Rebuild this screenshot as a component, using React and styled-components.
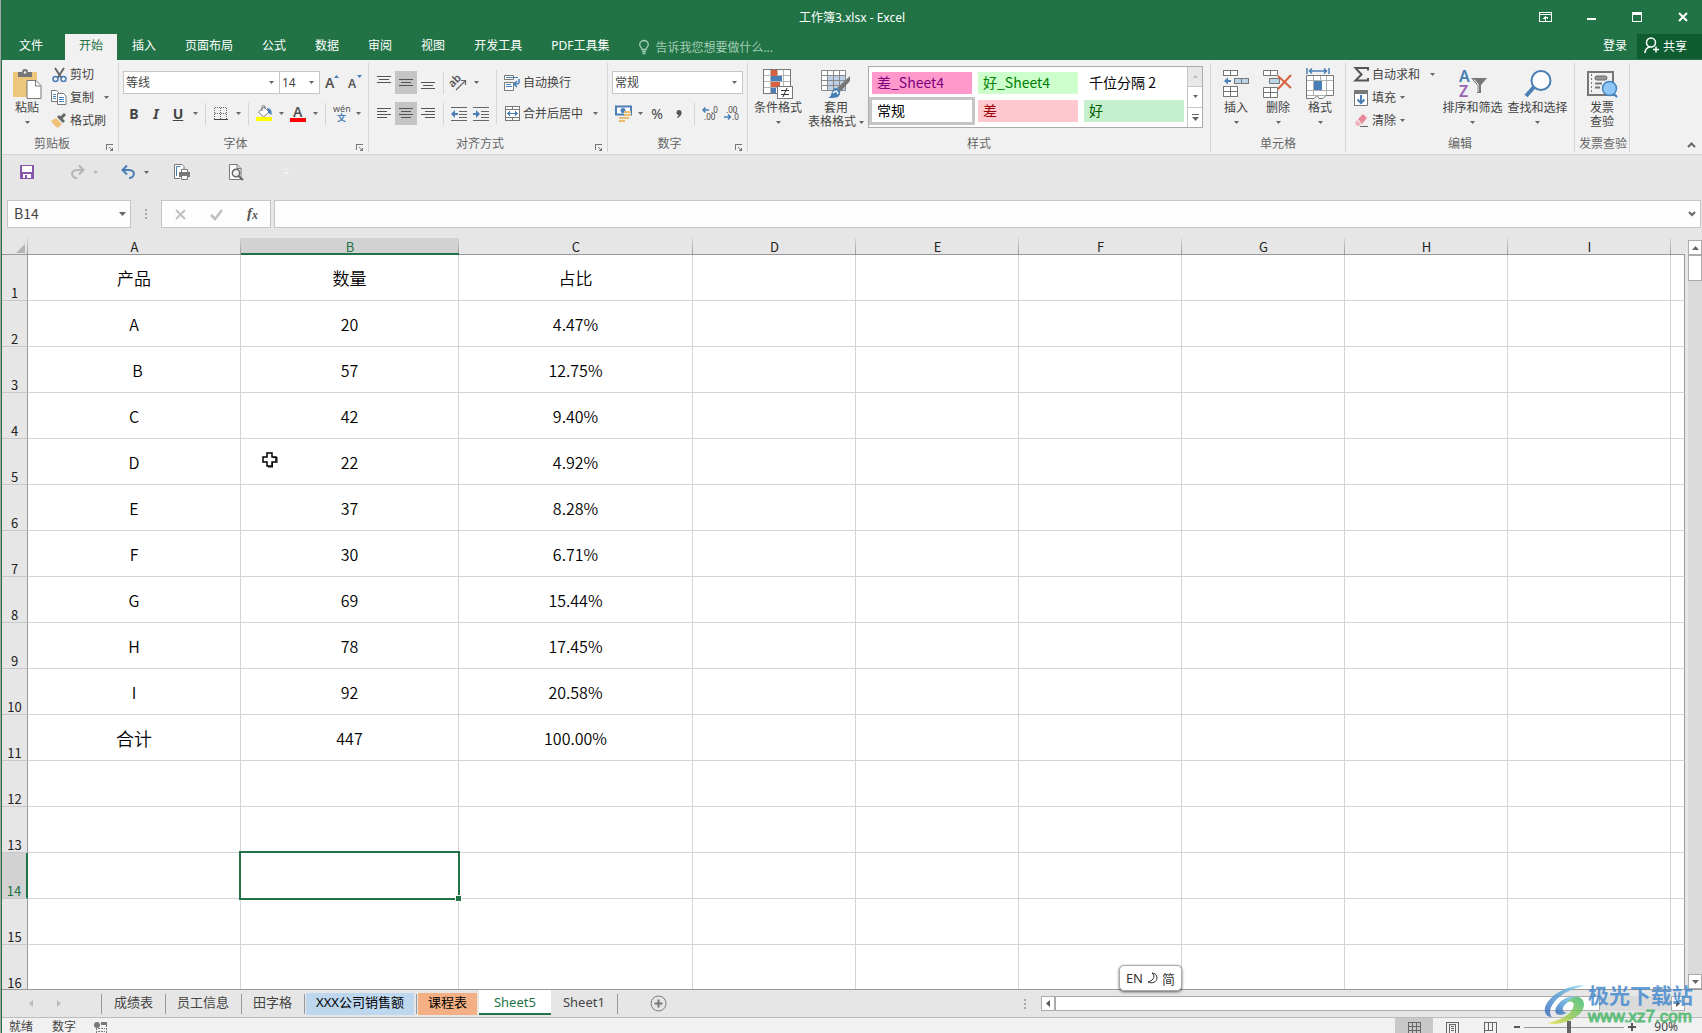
import styled, { createGlobalStyle, css } from "styled-components";

const UI = `"Noto Sans", "Noto Sans CJK SC", sans-serif`;
const CELL = `"Noto Sans CJK SC", sans-serif`;

const GlobalStyle = createGlobalStyle`
  * {
    box-sizing: border-box;
  }
  body {
    margin: 0;
    font-family: ${UI};
    font-size: 12px;
    color: #444;
  }
  button, input, select {
    font: inherit;
    color: inherit;
    margin: 0;
    padding: 0;
    border: 0;
    background: none;
    border-radius: 0;
    outline: none;
  }
  svg {
    display: block;
    flex: none;
    overflow: visible;
  }
`;

const Window = styled.div`
  position: relative;
  display: flex;
  flex-direction: column;
  height: 100vh;
  overflow: hidden;
  border-left: 1px solid #a6a6a6;
  padding-left: 1px;
  background: #217346;
`;

/* title bar and tabs */
const TitleBar = styled.header`
  display: grid;
  grid-template-columns: 1fr auto 1fr;
  align-items: center;
  height: 34px;
  flex: none;
  color: #fff;
`;
const Title = styled.h1`
  grid-column: 2;
  margin: 0;
  font-size: 12px;
  font-weight: normal;
`;
const WindowButtons = styled.div`
  display: flex;
  justify-content: flex-end;
  gap: 8px;
`;
const WindowButton = styled.button`
  width: 38px;
  height: 32px;
  display: grid;
  place-items: center;
`;
const TabBar = styled.nav`
  display: flex;
  gap: 1px;
  height: 26px;
  flex: none;
  color: #fff;
`;
const Tab = styled.button`
  padding: ${(p) => (p.$file ? "0 21px 2px 17px" : "0 14px 2px")};
  line-height: 20px;
  white-space: nowrap;
  ${(p) =>
    p.$active &&
    css`
      background: #f1f1f1;
      color: #217346;
    `}
`;
const TellMe = styled.label`
  display: flex;
  align-items: center;
  gap: 6px;
  flex: 1;
  padding-left: 15px;
  color: #a3cdb4;
  input {
    flex: 1;
    min-width: 0;
  }
  input::placeholder {
    color: #a3cdb4;
    opacity: 1;
  }
`;
const SignIn = styled.a`
  color: #fff;
  text-decoration: none;
  line-height: 24px;
  margin-right: 9px;
`;
const Share = styled.button`
  display: flex;
  align-items: center;
  gap: 4px;
  width: 65px;
  height: 25px;
  padding: 0 0 2px 7px;
  background: #0e5c2f;
`;

/* ribbon */
const Ribbon = styled.section`
  display: flex;
  height: 95px;
  flex: none;
  padding: 3px 0 2px;
  background: #f1f1f1;
  border-bottom: 1px solid #d2d2d2;
`;
const Group = styled.div`
  display: flex;
  flex-direction: column;
  flex: none;
  width: ${(p) => p.$w}px;
  padding: 0 4px;
  border-right: 1px solid #d4d4d4;
`;
const GroupBody = styled.div`
  display: flex;
  height: 73px;
`;
const GroupFoot = styled.div`
  display: flex;
  height: 16px;
  line-height: 16px;
  color: #666;
  white-space: nowrap;
  span {
    flex: 1;
    text-align: center;
  }
  button {
    width: 16px;
    display: grid;
    align-items: end;
    justify-items: end;
  }
`;
const Stack = styled.div`
  display: flex;
  flex-direction: column;
  flex: none;
  width: ${(p) => (p.$w ? p.$w + "px" : "auto")};
`;
const Rows = styled(Stack)`
  padding-top: 4px;
`;
const ToolRow = styled.div`
  display: flex;
  align-items: center;
  height: 31px;
`;
const Tool = styled.button`
  display: grid;
  place-items: center;
  width: ${(p) => (p.$wide ? 24 : 22)}px;
  height: 23px;
  flex: none;
  font-size: 14px;
  line-height: 20px;
  font-weight: ${(p) => (p.$bold ? 700 : 400)};
  background: ${(p) => (p.$on ? "#c5c5c5" : "transparent")};
`;
const DropButton = styled.button`
  display: grid;
  place-items: center;
  width: 12px;
  height: 22px;
  flex: none;
`;
const Sep = styled.i`
  width: 1px;
  height: ${(p) => (p.$tall ? 54 : 22)}px;
  margin: ${(p) => (p.$tall ? "7px 4px 0" : "0 4px")};
  background: #d4d4d4;
  flex: none;
`;
const SmallButton = styled.button`
  display: flex;
  align-items: center;
  height: ${(p) => p.$h || 23}px;
  white-space: nowrap;
  line-height: 18px;
  > span {
    width: 22px;
    display: grid;
    place-items: center;
  }
  > span + span {
    width: 12px;
    margin-left: ${(p) => (p.$wide ? "6px" : "0")};
  }
`;
const BigButton = styled.button`
  display: flex;
  flex-direction: column;
  align-items: center;
  flex: none;
  width: ${(p) => p.$w}px;
  padding-top: 4px;
  line-height: 14px;
  white-space: nowrap;
  > span {
    display: flex;
    align-items: center;
    justify-content: center;
    gap: 3px;
    min-height: 14px;
  }
  > span:first-child {
    height: 34px;
  }
`;
const Combo = styled.label`
  position: relative;
  display: block;
  width: ${(p) => p.$w}px;
  height: 23px;
  border: 1px solid #c6c6c6;
  background: #fff;
  & + & {
    border-left: 0;
  }
  select {
    appearance: none;
    width: 100%;
    height: 100%;
    padding-left: 2px;
    line-height: 18px;
  }
  svg {
    position: absolute;
    right: 5px;
    top: 9px;
    pointer-events: none;
  }
`;
const Gallery = styled.div`
  display: flex;
  width: 335px;
  height: 62px;
  margin-top: 3px;
  border: 1px solid #ababab;
  background: #fff;
`;
const Swatches = styled.div`
  display: grid;
  grid-template-columns: repeat(3, 106px);
  grid-template-rows: 28px 28px;
  padding-top: 2px;
`;
const Swatch = styled.button`
  text-align: left;
  padding: 0 0 2px 5px;
  font-family: ${CELL};
  font-size: 14px;
  line-height: 20px;
  color: ${(p) => p.$fg};
  background: ${(p) => p.$bg};
  background-clip: padding-box;
  border: 3px solid ${(p) => (p.$on ? "#c6c6c6" : "transparent")};
`;
const GalleryScroll = styled.div`
  display: flex;
  flex-direction: column;
  flex: 1;
  border-left: 1px solid #c6c6c6;
  button {
    flex: 1;
    display: grid;
    place-items: center;
  }
  button:first-child {
    background: #e8e8e8;
  }
  button + button {
    border-top: 1px solid #c6c6c6;
  }
`;
const Collapse = styled.button`
  margin-left: auto;
  align-self: flex-end;
  width: 22px;
  height: 14px;
  display: grid;
  place-items: center;
`;

/* quick access and formula bar */
const QuickAccess = styled.div`
  display: grid;
  grid-template-columns: 50px 51px 54px 54px 50px 28px;
  align-items: center;
  height: 34px;
  flex: none;
  padding-left: 11px;
  background: #e6e6e6;
`;
const QuickItem = styled.div`
  display: flex;
  align-items: center;
  button {
    display: grid;
    place-items: center;
    height: 24px;
    width: 28px;
  }
  button + button {
    width: 8px;
  }
`;
const FormulaBar = styled.div`
  display: grid;
  grid-template-columns: 124px 30px 110px 1fr;
  height: 49px;
  flex: none;
  padding: 11px 1px 10px 5px;
  background: #e6e6e6;
`;
const Field = styled.div`
  display: flex;
  align-items: center;
  border: 1px solid #c6c6c6;
  background: #fdfdfd;
  margin-left: ${(p) => (p.$gap ? "3px" : "0")};
  input {
    flex: 1;
    min-width: 0;
    height: 100%;
    padding: 0 0 2px 6px;
    font-family: ${CELL};
    font-size: 14px;
  }
  button {
    width: ${(p) => (p.$marks ? 36 : 16)}px;
    height: 100%;
    display: grid;
    place-items: center;
  }
`;
const Grip = styled.div`
  display: grid;
  place-items: center;
`;

/* sheet */
const SheetArea = styled.main`
  display: flex;
  flex: 1;
  min-height: 0;
  background: #e6e6e6;
  border-bottom: 1px solid #999;
`;
const SheetView = styled.div`
  position: relative;
  flex: 1;
  overflow: hidden;
`;
const Sheet = styled.table`
  width: 100%;
  table-layout: fixed;
  border-collapse: separate;
  border-spacing: 0;
  font-family: ${CELL};
  th {
    font-weight: 400;
    color: #222;
    font-size: 13px;
  }
`;
const ColHead = styled.th`
  height: 17px;
  padding: 2px 0 0;
  line-height: 14px;
  border-bottom: 1px solid #999;
  background: linear-gradient(#d6d6d6, #999) right / 1px 100% no-repeat #e6e6e6;
  ${(p) =>
    p.$on &&
    css`
      &&& {
        color: #217346;
      }
      background-color: #d2d2d2;
      border-bottom: 2px solid #217346;
      line-height: 13px;
    `}
  &:last-child {
    background: #e6e6e6;
  }
`;
const Corner = styled(ColHead)`
  svg {
    margin: 2px 3px 0 auto;
  }
`;
const RowHead = styled.th`
  height: 46px;
  padding: 0;
  vertical-align: bottom;
  line-height: 14px;
  background: ${(p) => (p.$on ? "#d2d2d2" : "#e6e6e6")};
  border-right: ${(p) => (p.$on ? "2px solid #217346" : "1px solid #999")};
  border-bottom: 1px solid #c8c8c8;
  ${(p) =>
    p.$on &&
    css`
      &&& {
        color: #217346;
      }
    `}
`;
const Cell = styled.td`
  position: relative;
  height: 46px;
  padding: 0;
  text-align: center;
  white-space: pre;
  font-size: ${(p) => p.$size || 16}px;
  font-weight: 350;
  line-height: 24px;
  color: #000;
  background: #fff;
  border-right: 1px solid #d4d4d4;
  border-bottom: 1px solid #d4d4d4;
  &:last-child {
    border-right-color: #999;
  }
`;
const Selection = styled.span`
  position: absolute;
  inset: -2px;
  z-index: 1;
  border: 2px solid #217346;
  &::after {
    content: "";
    position: absolute;
    right: -3px;
    bottom: -3px;
    width: 5px;
    height: 5px;
    background: #217346;
    box-shadow: 0 0 0 1px #fff;
  }
`;
const Pointer = styled.svg`
  position: absolute;
  left: 260px;
  top: 214px;
`;
const VScroll = styled.div`
  display: flex;
  flex-direction: column;
  width: 14px;
  margin: 2px 0 0 3px;
  background: #dadada;
`;
const ScrollButton = styled.button`
  width: 14px;
  height: 15px;
  flex: none;
  display: grid;
  place-items: center;
  background: #fff;
  border: 1px solid #ababab;
`;
const VThumb = styled.div`
  height: 26px;
  background: #fff;
  border: 1px solid #ababab;
`;
const Spacer = styled.div`
  flex: 1;
`;

/* sheet tabs and status bar */
const SheetBar = styled.div`
  display: flex;
  height: 28px;
  flex: none;
  padding-right: 17px;
  background: #e6e6e6;
  border-bottom: 1px solid #bcbcbc;
`;
const SheetNav = styled.div`
  display: flex;
  width: 99px;
  padding-left: 15px;
  button {
    width: 28px;
    display: grid;
    place-items: center;
  }
`;
const SheetTab = styled.button`
  position: relative;
  height: 22px;
  margin: 3px 2px;
  padding: 0 10px 4px;
  font-size: 13px;
  line-height: 18px;
  white-space: nowrap;
  color: ${(p) => (p.$bg ? "#000" : "#444")};
  background: ${(p) => p.$bg || "transparent"};
  ${(p) =>
    p.$on
      ? css`
          height: 25px;
          margin: 0;
          padding: 1px 15px 0;
          background: #fff;
          color: #217346;
          border-bottom: 2px solid #217346;
        `
      : css`
          &::after {
            content: "";
            position: absolute;
            right: -3px;
            top: 1px;
            width: 1px;
            height: 20px;
            background: #999;
          }
        `}
`;
const FirstRule = styled.i`
  width: 1px;
  height: 20px;
  margin-top: 4px;
  background: #999;
`;
const AddSheet = styled.button`
  width: 84px;
  display: grid;
  place-items: center;
`;
const HScroll = styled.div`
  display: flex;
  width: 644px;
  height: 15px;
  margin-top: 6px;
  margin-left: 5px;
  background: #dadada;
`;
const HThumb = styled.div`
  width: 545px;
  background: #fff;
  border: 1px solid #ababab;
`;
const StatusBar = styled.footer`
  display: flex;
  justify-content: space-between;
  height: 15px;
  flex: none;
  overflow: hidden;
  background: #f1f1f1;
  padding: 0 24px 0 7px;
`;
const StatusGroup = styled.div`
  display: flex;
  height: 18px;
  line-height: 18px;
`;
const StatusText = styled.span`
  width: ${(p) => p.$w}px;
`;
const Percent = styled.output`
  width: 39px;
  text-align: right;
`;
const ViewButton = styled.button`
  width: 38px;
  display: grid;
  align-items: center;
  justify-items: center;
  padding-top: 3px;
  background: ${(p) => (p.$on ? "#c8c8c8" : "transparent")};
`;
const ZoomButton = styled.button`
  width: 15px;
  display: grid;
  place-items: center;
`;
const ZoomRange = styled.input`
  appearance: none;
  width: 100px;
  background: linear-gradient(#999, #999) center / 100% 1px no-repeat;
  &::-webkit-slider-thumb {
    appearance: none;
    width: 4px;
    height: 12px;
    background: #666;
  }
`;

/* overlays */
const Ime = styled.div`
  position: absolute;
  right: 520px;
  bottom: 42px;
  display: flex;
  align-items: center;
  gap: 4px;
  height: 26px;
  padding: 0 6px;
  font-size: 13px;
  color: #333;
  background: #fff;
  border: 1px solid #aaa;
  border-radius: 5px;
  box-shadow: 0 1px 3px rgba(0, 0, 0, 0.6);
`;
const Watermark = styled.div`
  position: absolute;
  right: 9px;
  bottom: 5px;
  display: flex;
  align-items: center;
  gap: 3px;
  opacity: 0.8;
  pointer-events: none;
  strong {
    display: block;
    font-family: ${CELL};
    font-size: 21px;
    line-height: 24px;
    color: #3d86cd;
  }
  span {
    display: block;
    font-family: "Liberation Sans", sans-serif;
    font-size: 17px;
    line-height: 22px;
    color: #41b565;
    -webkit-text-stroke: 1px #41b565;
  }
`;

const G = "#777";
const B = "#4a7fb5";

const Svg = ({ w, h, crisp, children }) => (
  <svg
    width={w}
    height={h}
    viewBox={`0 0 ${w} ${h}`}
    fill="none"
    shapeRendering={crisp ? "crispEdges" : "auto"}
    aria-hidden="true"
  >
    {children}
  </svg>
);

const Arrow = ({ big, color = "#666" }) =>
  big ? (
    <Svg w={7} h={4}><path d="M0 0h7L3.500 4z" fill={color} /></Svg>
  ) : (
    <Svg w={5} h={3}><path d="M0 0h5L2.500 3z" fill={color} /></Svg>
  );

const Lines = ({ w = 14, rows }) => (
  <Svg w={w} h={13} crisp>
    {rows.map(([x, y, len]) => (
      <path key={y} d={`M${x} ${y}.500h${len}`} stroke="#555" />
    ))}
  </Svg>
);

const PasteIcon = () => (
  <Svg w={30} h={30}>
    <path d="M1 3h24v25H1z" fill="#eec77f" />
    <path d="M6 3h4a3 3 0 0 1 6 0h4v5H6z" fill="#777" />
    <circle cx="13" cy="3.500" r="1.200" fill="#f1f1f1" />
    <path d="M15 11.500h9l5 5v13H15z" fill="#fff" stroke={G} />
    <path d="M23.500 11.500v5.500h5" stroke={G} />
  </Svg>
);
const CutIcon = () => (
  <Svg w={15} h={16}>
    <path d="M3 1l6.500 10M12 1L5.500 11" stroke="#666" strokeWidth="2" />
    <circle cx="3.500" cy="12" r="2.500" stroke={B} strokeWidth="1.500" />
    <circle cx="11.500" cy="12" r="2.500" stroke={B} strokeWidth="1.500" />
  </Svg>
);
const CopyIcon = () => (
  <Svg w={16} h={15}>
    <path d="M.5.5h5l2 2v9h-7z" fill="#fff" stroke={G} />
    <path d="M2 4.500h3M2 6.500h3M2 8.500h3" stroke={B} />
    <path d="M6.500 3.500h6l2.500 2.500v8.500H6.500z" fill="#fff" stroke={G} />
    <path d="M8 7.500h5M8 9.500h5M8 11.500h5" stroke={B} />
  </Svg>
);
const BrushIcon = () => (
  <Svg w={16} h={15}>
    <path d="M0 8l5-3 6 6-4 4-3-2z" fill="#eec07a" />
    <path d="M6 4l2-2 6 6-2 2z" fill="#666" />
    <path d="M10 5l4-4" stroke="#666" strokeWidth="3" />
  </Svg>
);
const LauncherIcon = () => (
  <Svg w={8} h={8} crisp>
    <path d="M.5 6V.5H7M3 3l3 3" stroke="#777" />
    <path d="M7 3v4H3z" fill="#777" />
  </Svg>
);
const FontSize = ({ up }) => (
  <Svg w={14} h={15}>
    <text x="0" y="13" fontSize={up ? 14 : 12} fontWeight="600" fill="#555">A</text>
    <path d={up ? "M9 3l2.500-3L14 3z" : "M9 0h5l-2.500 3z"} fill={B} />
  </Svg>
);
const BordersIcon = () => (
  <Svg w={14} h={14} crisp>
    <path d="M.5 1v11M6.500 1v11M12.500 1v11M1 .5h12M1 6.500h12" stroke="#666" strokeDasharray="1 1" />
    <path d="M0 12.500h14" stroke="#444" />
  </Svg>
);
const FillIcon = () => (
  <Svg w={17} h={17}>
    <path d="M2.500 7L8 2l5 5-5.500 5z" fill="#fff" stroke="#777" />
    <path d="M6 6V2a1.500 1.500 0 0 1 3 0v2" stroke="#777" />
    <path d="M11 3c4 0 5 3 4.500 7l-3-2z" fill={B} />
    <path d="M0 12h16v4H0z" fill="#ff0" />
  </Svg>
);
const FontColorIcon = () => (
  <Svg w={16} h={16}>
    <text x="3" y="11" fontSize="14" fontWeight="600" fill="#555">A</text>
    <path d="M0 12h16v4H0z" fill="#f00" />
  </Svg>
);
const WenIcon = () => (
  <Svg w={17} h={18}>
    <text x="0" y="7" fontSize="9" fill="#555">wén</text>
    <text x="4" y="16" fontSize="9" fontWeight="700" fill={B}>文</text>
  </Svg>
);
const OrientIcon = () => (
  <Svg w={18} h={16}>
    <text x="0" y="9" fontSize="11" fontWeight="600" fill="#555" transform="rotate(-45 6 8)">ab</text>
    <path d="M6 15L15 6M11 5.500h4.500V10" stroke="#666" strokeWidth="1.200" />
  </Svg>
);
const IndentIcon = ({ right }) => (
  <Svg w={16} h={14} crisp>
    <path d="M0 .5h16M8 4.500h8M8 7.500h8M8 10.500h8M0 13.500h16" stroke="#666" />
    <g shapeRendering="auto">
      <path d={right ? "M0 7h5" : "M2 7h5"} stroke={B} strokeWidth="2" />
      <path d={right ? "M3 3l4 4-4 4z" : "M4 3L0 7l4 4z"} fill={B} />
    </g>
  </Svg>
);
const WrapIcon = () => (
  <Svg w={16} h={16}>
    <path d="M.5.5h9v4h-9zM.5 7.500h9v8h-9z" fill="#fff" stroke={G} />
    <path d="M2 2.500h12M2 9.500h5M2 11.500h6" stroke={B} />
    <path d="M15 4v3q0 2-3 2h-1M13 6l-3 3 3 3" stroke={B} strokeWidth="1.500" />
  </Svg>
);
const MergeIcon = () => (
  <Svg w={15} h={15} crisp>
    <path d="M.5.5h14v14H.5zM.5 3.500h14M.5 11.500h14M7.500 0v3.500M7.500 11.500v3" fill="#fff" stroke={G} />
    <path d="M3 7.500h9M5 5.500l-2 2 2 2M10 5.500l2 2-2 2" stroke={B} />
  </Svg>
);
const MoneyIcon = () => (
  <Svg w={17} h={17}>
    <path d="M1 1.500h15v8H1z" fill="#fff" stroke={B} strokeWidth="2" />
    <circle cx="8" cy="5.500" r="2.500" fill={B} />
    <path d="M9 6h7v6H9zM4 12h7v4H4z" fill="#f1f1f1" />
    <path d="M9 7h7M9 10h7M9 13h5M4 13h7M4 16h6" stroke="#e8bd72" strokeWidth="2" />
  </Svg>
);
const DecimalIcon = ({ less }) => (
  <Svg w={16} h={15}>
    <text x={less ? 2 : 9} y="7" fontSize="8" fill="#444">{less ? ".00" : ".0"}</text>
    <text x={less ? 8 : 2} y="14" fontSize="8" fill="#444">{less ? ".0" : ".00"}</text>
    <path d={less ? "M0 11h6M4 8.500L6.500 11 4 13.500" : "M1 4h6M3.500 1.500L1 4l2.500 2.500"} stroke={B} strokeWidth="1.500" />
  </Svg>
);
const CondIcon = () => (
  <Svg w={30} h={31} crisp>
    <path d="M.5.5h27v24H.5z" fill="#fff" />
    <path d="M8 19h5v5H8z" fill={B} />
    <path d="M7.500 1v23M20.500 1v23M14.500 1v23M1 6.500h27M1 12.500h27M1 18.500h27" stroke="#b5b5b5" />
    <path d="M8 1h6v6H8zM8 13h9v5H8z" fill="#d9613f" />
    <path d="M8 7h11v5H8z" fill={B} />
    <path d="M.5.5h27v24H.5z" stroke={G} />
    <path d="M14.500 17.500h15v12h-15z" fill="#fff" stroke={G} />
    <path d="M18 21.500h8M18 25.500h8M24 19l-4 9" stroke="#333" shapeRendering="auto" />
  </Svg>
);
const TableStyleIcon = () => (
  <Svg w={30} h={30}>
    <path d="M.5 1.500h24v20H.5z" fill="#fff" />
    <path d="M6 7h18v14H6z" fill="#bcd0e8" />
    <path d="M.5 1.500h24v20H.5zM6.500 2v19M12.500 2v19M18.500 2v19M1 6.500h23M1 11.500h23M1 16.500h23" stroke="#8a8a8a" />
    <path d="M29 7v5L20 22l-4-3z" fill="#777" />
    <path d="M15 19c5 1 5 5 3 8-2 2-6 2-11 2 3-1 3-4 4-6 1-2 2-4 4-4z" fill={B} />
    <path d="M12 24q4-4 5 1" stroke="#fff" strokeWidth="1.500" />
  </Svg>
);
const InsertIcon = () => (
  <Svg w={27} h={28} crisp>
    <path d="M.5.5h14v5H.5zM7.500 0v6M.5 16.500h14v10H.5zM7.500 16v11M0 21.500h15" fill="#fff" stroke={G} />
    <path d="M11.500 8.500h14v5h-14zM18.500 8v6" fill="#bdd3e8" stroke={G} />
    <g shapeRendering="auto">
      <path d="M3 11h5" stroke={B} strokeWidth="2" />
      <path d="M5 7.500L1 11l4 3.500z" fill={B} />
    </g>
  </Svg>
);
const DeleteIcon = () => (
  <Svg w={30} h={28}>
    <path d="M.5.5h14v5H.5zM7.500 0v6M.5 17.500h14v10H.5zM7.500 17v11M0 22.500h15" fill="#fff" stroke={G} />
    <path d="M6.500 8.500h10v5h-10z" fill="#bdd3e8" stroke={G} />
    <path d="M15 6l13 12M28 5L15 19" stroke="#d9613f" strokeWidth="2" />
  </Svg>
);
const FormatIcon = () => (
  <Svg w={29} h={32}>
    <path d="M1 0v6M23 0v6M3 3h18M6 .5L3.500 3 6 5.500M18 .5L20.500 3 18 5.500" stroke={B} strokeWidth="1.500" />
    <path d="M.5 7.500h27v20H20l-3 3h-4l-2-3-3 3H.5z" fill="#fff" stroke={G} />
    <path d="M7.500 8v19M20.500 8v19M14.500 8v4M1 12.500h26M1 22.500h26M1 27.500h19" stroke="#b0b0b0" />
    <path d="M8 13h8v9H8z" fill={B} />
  </Svg>
);
const SigmaIcon = () => (
  <Svg w={15} h={15}>
    <path d="M14 3.500V1H1.500l6 6.500-6 6H14V11" stroke="#555" strokeWidth="2" />
  </Svg>
);
const FillDownIcon = () => (
  <Svg w={14} h={16}>
    <path d="M.5.5h13v15H.5z" fill="#fff" stroke={G} />
    <path d="M0 0h14v4H0z" fill={G} />
    <path d="M7 5v8M3.500 9.500L7 13l3.500-3.500" stroke={B} strokeWidth="2" />
  </Svg>
);
const EraserIcon = () => (
  <Svg w={15} h={14}>
    <path d="M4 5l5-5 4 4-5 6z" fill="#e7899b" />
    <path d="M3 6l4 4-2 2H3L1 9z" fill="#f0b0bc" />
    <path d="M6 12.500h8" stroke="#666" />
  </Svg>
);
const SortIcon = () => (
  <Svg w={30} h={28}>
    <text x="1" y="12" fontSize="16" fontWeight="600" fill={B}>A</text>
    <text x="1" y="27" fontSize="16" fontWeight="600" fill="#9a63b8">Z</text>
    <path d="M13 8h16l-6 7v8h-4v-8z" fill={G} />
    <path d="M16 9.500l4 4.500v8" stroke="#fff" />
  </Svg>
);
const FindIcon = () => (
  <Svg w={28} h={28}>
    <path d="M10 17L2 26" stroke={B} strokeWidth="4" />
    <circle cx="17" cy="10.500" r="9.500" fill="#fff" stroke={B} strokeWidth="2" />
  </Svg>
);
const InvoiceIcon = () => (
  <Svg w={31} h={28}>
    <path d="M1 2h25v23H1z" stroke={G} strokeWidth="2" />
    <path d="M4.500 4v19" stroke={G} strokeDasharray="2 2" />
    <rect x="8" y="6" width="12" height="4" rx="2" fill="#999" stroke="#666" />
    <path d="M8 13.500h7M8 17.500h5" stroke={G} strokeWidth="2" />
    <path d="M26 23l4 4" stroke="#3b78b8" strokeWidth="2" />
    <circle cx="22.500" cy="18.500" r="7" fill="#8fc6f5" stroke="#4682bd" strokeWidth="1.500" />
  </Svg>
);

const SaveIcon = () => (
  <Svg w={14} h={14} crisp>
    <path d="M0 0h14v14H0z" fill="#8756a8" />
    <path d="M2 1h10v6H2zM3 9h8v4H3z" fill="#fff" />
    <path d="M5 10h2v3H5z" fill="#8756a8" />
  </Svg>
);
const TurnIcon = ({ redo }) => (
  <Svg w={15} h={14}>
    <g transform={redo ? "translate(15 0) scale(-1 1)" : ""} stroke={redo ? "#b4b4b4" : B}>
      <path d="M2 5h6c7 0 6 8 0 8" strokeWidth="2" />
      <path d="M6 .5L1.500 5 6 9.500" strokeWidth="2" />
    </g>
  </Svg>
);
const PrintIcon = () => (
  <Svg w={16} h={16}>
    <path d="M6 14.500H.5V.5H8l2 2V5" fill="#fff" stroke={G} />
    <path d="M2.500 12V2.500h4" stroke={B} />
    <path d="M5 8h11v5H5z" fill={G} />
    <path d="M7.500 5.500h6v3h-6zM7.500 11.500h6v4h-6z" fill="#fff" stroke={G} />
  </Svg>
);
const PreviewIcon = () => (
  <Svg w={15} h={17}>
    <path d="M.5.5H8l4 4v11H.5z" fill="#fff" stroke={G} />
    <path d="M8 .5v4h4" stroke={G} />
    <path d="M9.500 12l4.500 4" stroke="#666" strokeWidth="2" />
    <circle cx="7" cy="9" r="3.700" fill="#eee" stroke="#666" strokeWidth="1.500" />
  </Svg>
);

const Drop = ({ label }) => (
  <DropButton aria-label={label}>
    <Arrow />
  </DropButton>
);

function RibbonGroup({ label, w, launcher, children }) {
  return (
    <Group $w={w}>
      <GroupBody>{children}</GroupBody>
      <GroupFoot>
        <span>{label}</span>
        {launcher && (
          <button aria-label={label + "设置"}>
            <LauncherIcon />
          </button>
        )}
      </GroupFoot>
    </Group>
  );
}

function Small({ icon, label, arrow, wide, h }) {
  return (
    <SmallButton $wide={wide} $h={h}>
      <span>{icon}</span>
      {label}
      {arrow && <span><Arrow /></span>}
    </SmallButton>
  );
}

function Big({ w, icon, label, second, arrow = true }) {
  return (
    <BigButton $w={w}>
      <span>{icon}</span>
      <span>{label}</span>
      <span>
        {second}
        {arrow && <Arrow />}
      </span>
    </BigButton>
  );
}

const tabs = ["文件", "开始", "插入", "页面布局", "公式", "数据", "审阅", "视图", "开发工具", "PDF工具集"];

const swatches = [
  ["差_Sheet4", "#800080", "#ff99cc"],
  ["好_Sheet4", "#008000", "#ccffcc"],
  ["千位分隔 2", "#000", "#fff"],
  ["常规", "#000", "#fff", true],
  ["差", "#9c0006", "#ffc7ce"],
  ["好", "#006100", "#c6efce"],
];

const columns = [
  ["A", 213],
  ["B", 218],
  ["C", 234],
  ["D", 163],
  ["E", 163],
  ["F", 163],
  ["G", 163],
  ["H", 163],
  ["I", 163],
];

const data = [
  ["产品", "数量", "占比"],
  ["A", "20", "4.47%"],
  ["  B", "57", "12.75%"],
  ["C", "42", "9.40%"],
  ["D", "22", "4.92%"],
  ["E", "37", "8.28%"],
  ["F", "30", "6.71%"],
  ["G", "69", "15.44%"],
  ["H", "78", "17.45%"],
  ["I", "92", "20.58%"],
  ["合计", "447", "100.00%"],
];

// headings are set a little larger, the total's label larger still
const cellSize = (text) => {
  if (text === "合计") return 18;
  return /[\u4e00-\u9fff]/.test(text || "") ? 17 : 16;
};

const sheets = [
  { name: "成绩表" },
  { name: "员工信息" },
  { name: "田字格" },
  { name: "XXX公司销售额", bg: "#bdd7ee" },
  { name: "课程表", bg: "#f4b084" },
  { name: "Sheet5", on: true },
  { name: "Sheet1" },
];

function Header() {
  return (
    <>
      <TitleBar>
        <Title>工作簿3.xlsx - Excel</Title>
        <WindowButtons>
          <WindowButton aria-label="功能区显示选项">
            <Svg w={13} h={10} crisp>
              <path d="M.5.5h12v9H.5zM0 2.500h13M6.500 9V4M4 6.500h1v-1h3v1h1" stroke="#fff" />
            </Svg>
          </WindowButton>
          <WindowButton aria-label="最小化">
            <Svg w={9} h={6} crisp><path d="M0 5h9" stroke="#fff" strokeWidth="2" /></Svg>
          </WindowButton>
          <WindowButton aria-label="最大化">
            <Svg w={10} h={10} crisp>
              <path d="M.5.5h9v9H.5z" stroke="#fff" />
              <path d="M0 0h10v3H0z" fill="#fff" />
            </Svg>
          </WindowButton>
          <WindowButton aria-label="关闭">
            <Svg w={10} h={10}><path d="M1 1l8 8M9 1L1 9" stroke="#fff" strokeWidth="2" /></Svg>
          </WindowButton>
        </WindowButtons>
      </TitleBar>
      <TabBar>
        {tabs.map((t, i) => (
          <Tab key={t} $file={i === 0} $active={i === 1}>{t}</Tab>
        ))}
        <TellMe>
          <Svg w={10} h={14}>
            <path d="M3 9.500C3 8 .7 7 .7 4.500a4.300 4 0 0 1 8.600 0C9.300 7 7 8 7 9.500zM3 11.500h4M3.500 13.500h3" stroke="#a3cdb4" strokeWidth="1.300" />
          </Svg>
          <input aria-label="操作说明搜索" placeholder="告诉我您想要做什么..." />
        </TellMe>
        <SignIn href="#login">登录</SignIn>
        <Share>
          <Svg w={15} h={17}>
            <circle cx="7" cy="5.500" r="4.500" stroke="#fff" strokeWidth="1.500" />
            <path d="M1 16c0-3 2-6 5-6M9 12.500h6M12 9.500v6" stroke="#fff" strokeWidth="1.500" />
          </Svg>
          共享
        </Share>
      </TabBar>
    </>
  );
}

function RibbonBar() {
  return (
    <Ribbon>
      <RibbonGroup label="剪贴板" w={117} launcher>
        <Big w={42} icon={<PasteIcon />} label="粘贴" />
        <Stack>
          <Small icon={<CutIcon />} label="剪切" />
          <Small icon={<CopyIcon />} label="复制" arrow wide />
          <Small icon={<BrushIcon />} label="格式刷" />
        </Stack>
      </RibbonGroup>

      <RibbonGroup label="字体" w={250} launcher>
        <Rows>
          <ToolRow>
            <Combo $w={157}>
              <select aria-label="字体"><option>等线</option></select>
              <Arrow />
            </Combo>
            <Combo $w={40}>
              <select aria-label="字号"><option>14</option></select>
              <Arrow />
            </Combo>
            <Tool $wide aria-label="增大字号"><FontSize up /></Tool>
            <Tool aria-label="减小字号"><FontSize /></Tool>
          </ToolRow>
          <ToolRow>
            <Tool $bold>B</Tool>
            <Tool $bold><i>I</i></Tool>
            <Tool $bold><u>U</u></Tool>
            <Drop label="下划线" />
            <Sep />
            <Tool aria-label="边框"><BordersIcon /></Tool>
            <Drop label="边框选项" />
            <Sep />
            <Tool aria-label="填充颜色"><FillIcon /></Tool>
            <Drop label="填充颜色选项" />
            <Tool aria-label="字体颜色"><FontColorIcon /></Tool>
            <Drop label="字体颜色选项" />
            <Sep />
            <Tool aria-label="拼音"><WenIcon /></Tool>
            <Drop label="拼音选项" />
          </ToolRow>
        </Rows>
      </RibbonGroup>

      <RibbonGroup label="对齐方式" w={239} launcher>
        <Rows>
          <ToolRow>
            <Tool aria-label="顶端对齐"><Lines rows={[[0, 0, 14], [2, 3, 10], [0, 6, 14]]} /></Tool>
            <Tool $on aria-label="垂直居中"><Lines rows={[[0, 3, 14], [2, 6, 10], [0, 9, 14]]} /></Tool>
            <Tool aria-label="底端对齐"><Lines rows={[[0, 6, 14], [2, 9, 10], [0, 12, 14]]} /></Tool>
            <Sep />
            <Tool aria-label="方向"><OrientIcon /></Tool>
            <Drop label="方向选项" />
          </ToolRow>
          <ToolRow>
            <Tool aria-label="左对齐"><Lines rows={[[0, 1, 14], [0, 4, 10], [0, 7, 14], [0, 10, 10]]} /></Tool>
            <Tool $on aria-label="居中"><Lines rows={[[0, 1, 14], [2, 4, 10], [0, 7, 14], [2, 10, 10]]} /></Tool>
            <Tool aria-label="右对齐"><Lines rows={[[0, 1, 14], [4, 4, 10], [0, 7, 14], [4, 10, 10]]} /></Tool>
            <Sep />
            <Tool aria-label="减少缩进量"><IndentIcon /></Tool>
            <Tool aria-label="增加缩进量"><IndentIcon right /></Tool>
          </ToolRow>
        </Rows>
        <Sep $tall />
        <Rows>
          <Small h={31} icon={<WrapIcon />} label="自动换行" />
          <Small h={31} icon={<MergeIcon />} label="合并后居中" arrow wide />
        </Rows>
      </RibbonGroup>

      <RibbonGroup label="数字" w={140} launcher>
        <Rows>
          <ToolRow>
            <Combo $w={131}>
              <select aria-label="数字格式"><option>常规</option></select>
              <Arrow />
            </Combo>
          </ToolRow>
          <ToolRow>
            <Tool aria-label="会计数字格式"><MoneyIcon /></Tool>
            <Drop label="会计格式选项" />
            <Tool>%</Tool>
            <Tool aria-label="千位分隔样式">
              <Svg w={6} h={8}><circle cx="3" cy="2.500" r="2.500" fill="#555" /><path d="M5.500 2.500Q5.500 6 1.500 8L1 7q2-1 2-3z" fill="#555" /></Svg>
            </Tool>
            <Sep />
            <Tool aria-label="增加小数位数"><DecimalIcon /></Tool>
            <Tool aria-label="减少小数位数"><DecimalIcon less /></Tool>
          </ToolRow>
        </Rows>
      </RibbonGroup>

      <RibbonGroup label="样式" w={463}>
        <Big w={52} icon={<CondIcon />} label="条件格式" />
        <Big w={64} icon={<TableStyleIcon />} label="套用" second="表格格式" />
        <Gallery>
          <Swatches>
            {swatches.map(([name, fg, bg, on]) => (
              <Swatch key={name} $fg={fg} $bg={bg} $on={on}>{name}</Swatch>
            ))}
          </Swatches>
          <GalleryScroll>
            <button aria-label="上一行"><Svg w={5} h={3}><path d="M0 3h5L2.500 0z" fill="#bbb" /></Svg></button>
            <button aria-label="下一行"><Arrow /></button>
            <button aria-label="更多样式">
              <Svg w={7} h={7}><path d="M0 .5h7" stroke="#666" /><path d="M0 3h7L3.500 7z" fill="#666" /></Svg>
            </button>
          </GalleryScroll>
        </Gallery>
      </RibbonGroup>

      <RibbonGroup label="单元格" w={135}>
        <Big w={42} icon={<InsertIcon />} label="插入" />
        <Big w={42} icon={<DeleteIcon />} label="删除" />
        <Big w={42} icon={<FormatIcon />} label="格式" />
      </RibbonGroup>

      <RibbonGroup label="编辑" w={229}>
        <Stack $w={90}>
          <Small icon={<SigmaIcon />} label="自动求和" arrow wide />
          <Small icon={<FillDownIcon />} label="填充" arrow />
          <Small icon={<EraserIcon />} label="清除" arrow />
        </Stack>
        <Big w={65} icon={<SortIcon />} label="排序和筛选" />
        <Big w={65} icon={<FindIcon />} label="查找和选择" />
      </RibbonGroup>

      <RibbonGroup label="发票查验" w={55}>
        <Big w={46} icon={<InvoiceIcon />} label="发票" second="查验" arrow={false} />
      </RibbonGroup>

      <Collapse aria-label="折叠功能区">
        <Svg w={9} h={6}><path d="M1 5l3.500-3.500L8 5" stroke="#666" strokeWidth="2" /></Svg>
      </Collapse>
    </Ribbon>
  );
}

function Bars() {
  return (
    <>
      <QuickAccess>
        <QuickItem><button aria-label="保存"><SaveIcon /></button></QuickItem>
        <QuickItem>
          <button aria-label="恢复"><TurnIcon redo /></button>
          <button aria-label="恢复选项"><Arrow color="#b4b4b4" /></button>
        </QuickItem>
        <QuickItem>
          <button aria-label="撤消"><TurnIcon /></button>
          <button aria-label="撤消选项"><Arrow /></button>
        </QuickItem>
        <QuickItem><button aria-label="快速打印"><PrintIcon /></button></QuickItem>
        <QuickItem><button aria-label="打印预览"><PreviewIcon /></button></QuickItem>
        <QuickItem>
          <button aria-label="自定义快速访问工具栏">
            <Svg w={5} h={6}><path d="M0 .5h5" stroke="#f4f4f4" /><path d="M0 3h5L2.500 6z" fill="#f4f4f4" /></Svg>
          </button>
        </QuickItem>
      </QuickAccess>
      <FormulaBar>
        <Field>
          <input aria-label="名称框" defaultValue="B14" />
          <button aria-label="名称列表"><Arrow big /></button>
        </Field>
        <Grip>
          <Svg w={2} h={10} crisp><path d="M1 0v10" stroke="#aaa" strokeWidth="2" strokeDasharray="2 2" /></Svg>
        </Grip>
        <Field $marks>
          <button aria-label="取消">
            <Svg w={11} h={11}><path d="M1 1l9 9M10 1l-9 9" stroke="#c0c0c0" strokeWidth="2" /></Svg>
          </button>
          <button aria-label="输入">
            <Svg w={13} h={11}><path d="M1 6l4 4 7-9" stroke="#c0c0c0" strokeWidth="2.500" /></Svg>
          </button>
          <button aria-label="插入函数">
            <Svg w={12} h={15}>
              <text x="1" y="11" fontSize="15" fontStyle="italic" fontWeight="700" fontFamily="Liberation Serif, serif" fill="#555">f</text>
              <text x="6" y="12" fontSize="12" fontStyle="italic" fontWeight="700" fontFamily="Liberation Serif, serif" fill="#555">x</text>
            </Svg>
          </button>
        </Field>
        <Field $gap>
          <input aria-label="编辑栏" />
          <button aria-label="展开编辑栏">
            <Svg w={8} h={6}><path d="M1 1l3 3 3-3" stroke="#666" strokeWidth="2" /></Svg>
          </button>
        </Field>
      </FormulaBar>
    </>
  );
}

function Grid() {
  const rows = Array.from({ length: 16 }, (_, r) => data[r] || []);
  return (
    <SheetArea>
      <SheetView>
        <Sheet>
          <colgroup>
            <col width="26" />
            {columns.map(([c, w]) => (
              <col key={c} width={w} />
            ))}
            <col />
          </colgroup>
          <thead>
            <tr>
              <Corner aria-label="全选">
                <Svg w={9} h={9}><path d="M9 0v9H0z" fill="#b4b4b4" /></Svg>
              </Corner>
              {columns.map(([c]) => (
                <ColHead key={c} $on={c === "B"}>{c}</ColHead>
              ))}
              <ColHead />
            </tr>
          </thead>
          <tbody>
            {rows.map((row, r) => (
              <tr key={r}>
                <RowHead $on={r === 13}>{r + 1}</RowHead>
                {columns.map(([c], i) => (
                  <Cell key={c} $size={cellSize(row[i])}>
                    {row[i]}
                    {r === 13 && c === "B" && <Selection />}
                  </Cell>
                ))}
                <Cell />
              </tr>
            ))}
          </tbody>
        </Sheet>
        <Pointer width="16" height="16" viewBox="0 0 16 16">
          <path d="M5 1h5v4h4v5h-4v4H5v-4H1V5h4z" fill="#fff" stroke="#000" strokeWidth="1.500" />
          <path d="M11 5.500h4M15 5v6M10.500 11v4M6 15h5" stroke="#000" />
        </Pointer>
      </SheetView>
      <VScroll>
        <ScrollButton aria-label="向上滚动">
          <Svg w={7} h={4}><path d="M0 4h7L3.500 0z" fill="#666" /></Svg>
        </ScrollButton>
        <VThumb />
        <Spacer />
        <ScrollButton aria-label="向下滚动"><Arrow big /></ScrollButton>
      </VScroll>
    </SheetArea>
  );
}

function Footer() {
  return (
    <>
      <SheetBar>
        <SheetNav>
          <button aria-label="上一个工作表"><Svg w={4} h={7}><path d="M4 0v7L0 3.500z" fill="#bbb" /></Svg></button>
          <button aria-label="下一个工作表"><Svg w={4} h={7}><path d="M0 0v7l4-3.500z" fill="#bbb" /></Svg></button>
        </SheetNav>
        <FirstRule />
        {sheets.map((s) => (
          <SheetTab key={s.name} $bg={s.bg} $on={s.on}>{s.name}</SheetTab>
        ))}
        <AddSheet aria-label="新工作表">
          <Svg w={17} h={17}>
            <circle cx="8.500" cy="8.500" r="7.500" stroke="#777" />
            <path d="M8.500 4.500v8M4.500 8.500h8" stroke="#777" strokeWidth="2" />
          </Svg>
        </AddSheet>
        <Spacer />
        <Svg w={12} h={27} crisp>
          <path d="M1 9v11" stroke="#aaa" strokeWidth="2" strokeDasharray="2 2" />
        </Svg>
        <HScroll>
          <ScrollButton aria-label="向左滚动"><Svg w={4} h={7}><path d="M4 0v7L0 3.500z" fill="#555" /></Svg></ScrollButton>
          <HThumb />
          <Spacer />
          <ScrollButton aria-label="向右滚动"><Svg w={4} h={7}><path d="M0 0v7l4-3.500z" fill="#555" /></Svg></ScrollButton>
        </HScroll>
      </SheetBar>
      <StatusBar>
        <StatusGroup>
          <StatusText $w={43}>就绪</StatusText>
          <StatusText $w={41}>数字</StatusText>
          <Svg w={14} h={18}>
            <circle cx="4" cy="7" r="3" fill={G} />
            <path d="M8 4h6v3H8z" fill={G} />
            <path d="M3.500 10v8M13.500 7v11M5 10.500h7M5 13.500h7M5 16.500h7" stroke={G} strokeDasharray="2 1" />
          </Svg>
        </StatusGroup>
        <StatusGroup>
          <ViewButton $on aria-label="普通">
            <Svg w={13} h={13} crisp><path d="M.5.5h12v12H.5zM4.500 0v13M8.500 0v13M0 4.500h13M0 8.500h13" stroke="#666" /></Svg>
          </ViewButton>
          <ViewButton aria-label="页面布局">
            <Svg w={13} h={13} crisp><path d="M.5.5h12v12H.5zM3.500 2.500h6v9h-6zM5 4.500h3M5 6.500h3M5 8.500h3" stroke="#666" /></Svg>
          </ViewButton>
          <ViewButton aria-label="分页预览">
            <Svg w={13} h={13} crisp><path d="M.5 13V.5h12V13M4.500 0v8M8.500 0v8M0 8.500h9" stroke="#666" /></Svg>
          </ViewButton>
          <ZoomButton aria-label="缩小"><Svg w={6} h={2}><path d="M0 1h6" stroke="#555" strokeWidth="2" /></Svg></ZoomButton>
          <ZoomRange type="range" min="10" max="190" defaultValue="90" aria-label="显示比例" />
          <ZoomButton aria-label="放大"><Svg w={8} h={8}><path d="M0 4h8M4 0v8" stroke="#555" strokeWidth="2" /></Svg></ZoomButton>
          <Percent>90%</Percent>
        </StatusGroup>
      </StatusBar>
    </>
  );
}

export default function App() {
  return (
    <Window>
      <GlobalStyle />
      <Header />
      <RibbonBar />
      <Bars />
      <Grid />
      <Footer />
      <Ime>
        EN
        <Svg w={11} h={12}>
          <path d="M5 1c3 2 3 7-4 9 4 2 9 0 9-4 0-3-2-5-5-5z" stroke="#333" />
        </Svg>
        简
      </Ime>
      <Watermark>
        <svg width="41" height="40" viewBox="0 0 124 122" aria-hidden="true">
          <defs>
            <linearGradient id="sky" x1="1" y1="0" x2="0" y2="1">
              <stop offset="0" stopColor="#7cd6f0" />
              <stop offset="1" stopColor="#2d62b8" />
            </linearGradient>
            <linearGradient id="leaf" x1="1" y1="0" x2="0" y2="1">
              <stop offset="0" stopColor="#2fb56b" />
              <stop offset="1" stopColor="#e6dc3c" />
            </linearGradient>
          </defs>
          <path d="M124 2C80-4 10 30 2 72c-2 16 8 26 22 26-10-10-8-28 8-48C52 26 88 8 124 2z" fill="url(#sky)" />
          <path d="M104 38C70 26 38 56 34 76c-2 16 18 20 36 8-10 0-16-6-12-16 6-14 26-24 46-30z" fill="url(#sky)" />
          <path d="M100 36c28 4 28 36 4 56-24 20-64 32-94 24 40-8 78-28 80-56 0-8-8-12-18-8 6-10 18-16 28-16z" fill="url(#leaf)" />
        </svg>
        <div>
          <strong>极光下载站</strong>
          <span>www.xz7.com</span>
        </div>
      </Watermark>
    </Window>
  );
}
